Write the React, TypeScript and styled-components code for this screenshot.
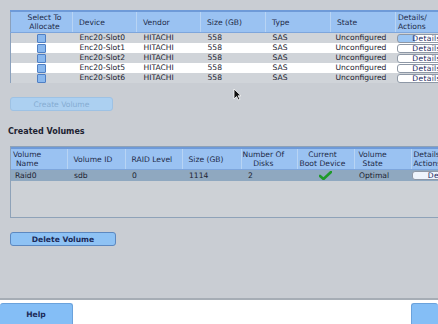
import styled, { createGlobalStyle } from 'styled-components';

const GlobalStyle = createGlobalStyle`
   html, body {
      margin: 0;
      padding: 0;
      background: #ffffff;
   }
   body {
      font-family: 'DejaVu Sans', 'Liberation Sans', sans-serif;
      font-size: 8px;
      color: #1c2230;
   }
`;

const Page = styled.div`
   width: 438px;
   height: 324px;
   display: flex;
   flex-direction: column;
   overflow: hidden;
`;

const Main = styled.main`
   position: relative;
   flex: 1;
   background: #c9cdd3;
   border-bottom: 2px solid #a6adb5;
   padding: 10px 0 0 10px;
   display: flex;
   flex-direction: column;
   align-items: flex-start;
`;

const Grid = styled.table<{ $width: number }>`
   width: ${(p) => p.$width}px;
   table-layout: fixed;
   border-collapse: collapse;
   font-size: 7.6px;
   line-height: 10px;
`;

const HeadCell = styled.th<{ $center?: boolean }>`
   background: #9ac2f2;
   border-top: 2px solid #6e9ad8;
   border-bottom: 1px solid #7ea6dc;
   border-left: 1px solid #b8d4f4;
   height: 20px;
   padding: 0 0 0 6px;
   font-weight: normal;
   text-align: ${(p) => (p.$center ? 'center' : 'left')};
   color: #1e2a48;
   line-height: 9px;
   vertical-align: middle;

   &:first-child {
      border-left: 1px solid #8aa0bc;
   }
`;

const HeadLabel = styled.span`
   display: inline-block;
   text-align: center;
`;

const Row = styled.tr<{ $tone: 'gray' | 'white' | 'selected' }>`
   background: ${(p) =>
      p.$tone === 'gray' ? '#d0d4d9' : p.$tone === 'white' ? '#ffffff' : '#8fa8c0'};
`;

const Cell = styled.td<{ $center?: boolean }>`
   padding: 0 0 0 7px;
   height: 10px;
   line-height: 10px;
   white-space: nowrap;
   overflow: hidden;
   text-align: ${(p) => (p.$center ? 'center' : 'left')};
   vertical-align: middle;

   &:first-child {
      border-left: 1px solid #8aa0bc;
   }
`;

const Check = styled.span`
   display: block;
   margin: 0 auto;
   width: 7px;
   height: 7px;
   background: #8ab8ee;
   border: 1px solid #4f7fc4;
   border-radius: 1px;
`;

const RowButton = styled.span<{ $active?: boolean }>`
   display: block;
   width: 58px;
   height: 7px;
   line-height: 7px;
   border: 1px solid #8e98a6;
   border-radius: 3px;
   background: ${(p) => (p.$active ? 'linear-gradient(90deg, #9cc6f4 0 30%, #ffffff 30%)' : '#ffffff')};
   color: #1a2660;
   text-align: center;
   letter-spacing: 0.3px;
`;

const Button = styled.button<{ $disabled?: boolean; $width: number }>`
   width: ${(p) => p.$width}px;
   height: 14px;
   padding: 0;
   border-radius: 3px;
   font-family: inherit;
   font-size: 7.6px;
   border: 1px solid ${(p) => (p.$disabled ? '#9ec2e4' : '#5c88c0')};
   background: ${(p) => (p.$disabled ? '#acd0f1' : '#8ec2f4')};
   color: ${(p) => (p.$disabled ? '#85acd2' : '#1b2a58')};
   font-weight: ${(p) => (p.$disabled ? 'normal' : 'bold')};
`;

const SectionTitle = styled.h3`
   margin: 16px 0 0 -2px;
   font-size: 8px;
   line-height: 10px;
   font-weight: bold;
   color: #1c2230;
`;

const Panel = styled.div`
   margin-top: 9px;
   width: 440px;
   height: 72px;
   background: #cdd1d6;
   border: 1px solid #8ea2b8;
   border-right: none;
   box-sizing: border-box;
`;

const Cursor = styled.svg`
   position: absolute;
   left: 233px;
   top: 88px;
`;

const Footer = styled.footer`
   height: 24px;
   background: #ffffff;
   display: flex;
   justify-content: space-between;
   align-items: flex-end;
`;

const FootButton = styled.button<{ $width: number }>`
   width: ${(p) => p.$width}px;
   height: 21px;
   padding: 0;
   border: 1px solid #6aa2dc;
   border-bottom: none;
   border-radius: 3px 3px 0 0;
   background: #84bef6;
   color: #1b2a58;
   font-family: inherit;
   font-size: 7.6px;
   font-weight: bold;
`;

const disks = ['Enc20-Slot0', 'Enc20-Slot1', 'Enc20-Slot2', 'Enc20-Slot5', 'Enc20-Slot6'];

const diskCols = [62, 64, 64, 65, 65, 65, 60];
const volCols = [56, 58, 57, 59, 56, 57, 57, 40];

const App = () => {
   return (
      <>
         <GlobalStyle />
         <Page>
            <Main>
               <Grid $width={445}>
                  <colgroup>
                     {diskCols.map((w, i) => (
                        <col key={i} style={{ width: w }} />
                     ))}
                  </colgroup>
                  <thead>
                     <tr>
                        <HeadCell $center>
                           Select To
                           <br />
                           Allocate
                        </HeadCell>
                        <HeadCell>Device</HeadCell>
                        <HeadCell>Vendor</HeadCell>
                        <HeadCell>Size (GB)</HeadCell>
                        <HeadCell>Type</HeadCell>
                        <HeadCell>State</HeadCell>
                        <HeadCell style={{ paddingLeft: 2 }}>
                           Details/
                           <br />
                           Actions
                        </HeadCell>
                     </tr>
                  </thead>
                  <tbody>
                     {disks.map((d, i) => (
                        <Row key={d} $tone={i % 2 === 0 ? 'gray' : 'white'}>
                           <Cell $center style={{ paddingLeft: 0 }}>
                              <Check />
                           </Cell>
                           <Cell>{d}</Cell>
                           <Cell>HITACHI</Cell>
                           <Cell>558</Cell>
                           <Cell>SAS</Cell>
                           <Cell style={{ paddingLeft: 5 }}>Unconfigured</Cell>
                           <Cell style={{ paddingLeft: 1 }}>
                              <RowButton $active={i === 0}>Details</RowButton>
                           </Cell>
                        </Row>
                     ))}
                  </tbody>
               </Grid>

               <Button $disabled $width={103} style={{ marginTop: 14 }}>
                  Create Volume
               </Button>

               <SectionTitle>Created Volumes</SectionTitle>

               <Panel>
                  <Grid $width={440}>
                     <colgroup>
                        {volCols.map((w, i) => (
                           <col key={i} style={{ width: w }} />
                        ))}
                     </colgroup>
                     <thead>
                        <tr>
                           <HeadCell style={{ paddingLeft: 2, borderLeft: 'none' }}>
                              <HeadLabel>
                                 Volume
                                 <br />
                                 Name
                              </HeadLabel>
                           </HeadCell>
                           <HeadCell>Volume ID</HeadCell>
                           <HeadCell>RAID Level</HeadCell>
                           <HeadCell>Size (GB)</HeadCell>
                           <HeadCell style={{ paddingLeft: 1 }}>
                              <HeadLabel>
                                 Number Of
                                 <br />
                                 Disks
                              </HeadLabel>
                           </HeadCell>
                           <HeadCell style={{ paddingLeft: 2 }}>
                              <HeadLabel>
                                 Current
                                 <br />
                                 Boot Device
                              </HeadLabel>
                           </HeadCell>
                           <HeadCell style={{ paddingLeft: 4 }}>
                              <HeadLabel>
                                 Volume
                                 <br />
                                 State
                              </HeadLabel>
                           </HeadCell>
                           <HeadCell style={{ paddingLeft: 2 }}>
                              Details/
                              <br />
                              Actions
                           </HeadCell>
                        </tr>
                     </thead>
                     <tbody>
                        <Row $tone='selected'>
                           <Cell style={{ paddingLeft: 4, borderLeft: 'none', height: 11 }}>Raid0</Cell>
                           <Cell>sdb</Cell>
                           <Cell>0</Cell>
                           <Cell>1114</Cell>
                           <Cell>2</Cell>
                           <Cell $center style={{ paddingLeft: 0 }}>
                              <svg width='13' height='9' viewBox='0 0 13 9' style={{ display: 'block', margin: '0 auto' }}>
                                 <path
                                    d='M1 5 L4.5 8 L12 1'
                                    fill='none'
                                    stroke='#1f9a2a'
                                    strokeWidth='2.6'
                                    strokeLinecap='round'
                                    strokeLinejoin='round'
                                 />
                              </svg>
                           </Cell>
                           <Cell style={{ paddingLeft: 5 }}>Optimal</Cell>
                           <Cell style={{ paddingLeft: 1 }}>
                              <RowButton style={{ background: '#eef4fc' }}>Details</RowButton>
                           </Cell>
                        </Row>
                     </tbody>
                  </Grid>
               </Panel>

               <Button $width={106} style={{ marginTop: 14 }}>
                  Delete Volume
               </Button>

               <Cursor width='9' height='13' viewBox='0 0 9 13'>
                  <path d='M1 1 L1 11 L3.5 8.5 L5.5 12 L7 11.2 L5 7.8 L8 7.8 Z' fill='#111' stroke='#fff' strokeWidth='0.8' />
               </Cursor>
            </Main>
            <Footer>
               <FootButton $width={73} style={{ borderLeft: 'none' }}>
                  Help
               </FootButton>
               <FootButton $width={27} style={{ borderRight: 'none' }} />
            </Footer>
         </Page>
      </>
   );
};

export default App;
